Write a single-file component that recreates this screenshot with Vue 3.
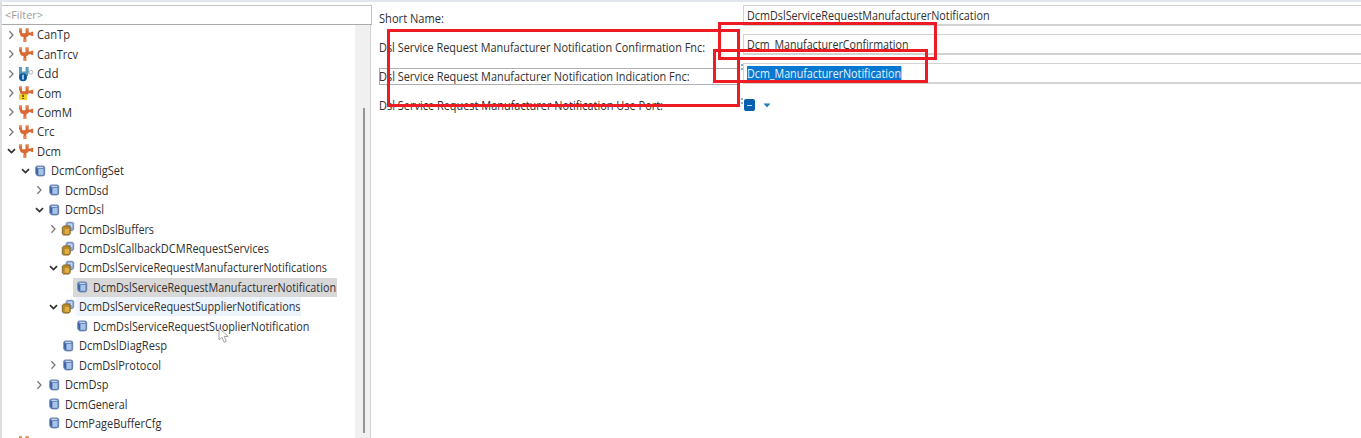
<script setup>
const ctx = document.createElement('canvas').getContext('2d')

// Condenses each label so that it takes exactly the given width.
function fit(text, width, size = 12) {
  ctx.font = `${size}px "Open Sans"`
  const natural = ctx.measureText(text).width
  return { transform: `scaleX(${width / natural})`, marginRight: `${width - natural}px` }
}

const rows = [
  { t: 'CanTp', d: 0, a: 'closed', i: 'module', w: 33 },
  { t: 'CanTrcv', d: 0, a: 'closed', i: 'module', w: 41 },
  { t: 'Cdd', d: 0, a: 'closed', i: 'cdd', w: 21.5 },
  { t: 'Com', d: 0, a: 'closed', i: 'warn', w: 24.5 },
  { t: 'ComM', d: 0, a: 'closed', i: 'module', w: 35 },
  { t: 'Crc', d: 0, a: 'closed', i: 'module', w: 17.5 },
  { t: 'Dcm', d: 0, a: 'open', i: 'module', w: 24 },
  { t: 'DcmConfigSet', d: 1, a: 'open', i: 'box', w: 73 },
  { t: 'DcmDsd', d: 2, a: 'closed', i: 'box', w: 43.5 },
  { t: 'DcmDsl', d: 2, a: 'open', i: 'box', w: 39 },
  { t: 'DcmDslBuffers', d: 3, a: 'closed', i: 'boxes', w: 75 },
  { t: 'DcmDslCallbackDCMRequestServices', d: 3, a: '', i: 'boxes', w: 190 },
  { t: 'DcmDslServiceRequestManufacturerNotifications', d: 3, a: 'open', i: 'boxes', w: 248 },
  { t: 'DcmDslServiceRequestManufacturerNotification', d: 4, a: '', i: 'box', w: 243, s: 'selected' },
  { t: 'DcmDslServiceRequestSupplierNotifications', d: 3, a: 'open', i: 'boxes', w: 221.5, s: 'hover' },
  { t: 'DcmDslServiceRequestSuoplierNotification', d: 4, a: '', i: 'box', w: 216.5 },
  { t: 'DcmDslDiagResp', d: 3, a: '', i: 'box', w: 88 },
  { t: 'DcmDslProtocol', d: 3, a: 'closed', i: 'box', w: 82 },
  { t: 'DcmDsp', d: 2, a: 'closed', i: 'box', w: 43.5 },
  { t: 'DcmGeneral', d: 2, a: '', i: 'box', w: 62.5 },
  { t: 'DcmPageBufferCfg', d: 2, a: '', i: 'box', w: 96.5 },
  { t: 'Dem', d: 0, a: 'closed', i: 'module', w: 24 },
]

const fields = [
  { l: 'Short Name:', lw: 65, v: 'DcmDslServiceRequestManufacturerNotification', w: 242.5 },
  { l: 'Dsl Service Request Manufacturer Notification Confirmation Fnc:', lw: 326, v: 'Dcm_ManufacturerConfirmation', w: 161.5 },
  { l: 'Dsl Service Request Manufacturer Notification Indication Fnc:', lw: 310.5, v: 'Dcm_ManufacturerNotification', w: 154, active: true },
  { l: 'Dsl Service Request Manufacturer Notification Use Port:', lw: 284 },
]
</script>

<template>
  <div class="window">
    <aside class="panel">
      <div class="filter"><span class="fit" :style="fit('<Filter>', 38, 11)">&lt;Filter&gt;</span></div>
      <div class="body">
        <div class="tree">
          <div v-for="r in rows" :key="r.t" class="row" :class="'depth' + r.d">
            <svg class="arrow" viewBox="0 0 10 12">
              <path v-if="r.a === 'closed'" class="closed" d="M3.4 2.2 7 6 3.4 9.8" />
              <path v-if="r.a === 'open'" class="open" d="M2 4.2 5.5 7.6 9 4.2" />
            </svg>
            <span class="node" :class="r.s">
              <svg class="icon" viewBox="0 0 16 16">
                <g v-if="r.i === 'module' || r.i === 'warn'">
                  <path d="M1 1.4h3v4.2q0 .6.8.6h2q.8 0 .8-.6V1.4h3v4h2.6V4.7h2V9h-2v-.8h-2.4Q10 9.8 8.3 10v4.8H5.5V10Q1.8 9.6 1.8 6.2L1 5z" fill="#d96a34" />
                  <path d="M1 1.4h3v2H1zM7.6 1.4h3v2h-3zM5.5 12.3h2.8v2.5H5.5z" fill="#e88a57" />
                </g>
                <g v-if="r.i === 'warn'">
                  <path d="M1 9.2h8v5.6H1z" fill="#f3d21b" />
                  <path d="M4.2 9.8h1.7v2.3H4.2zM4.2 13h1.7v1.1H4.2z" fill="#5b4a12" />
                </g>
                <g v-if="r.i === 'cdd'">
                  <path d="M1 1h3v4.5h3.6V1h3v4h1.4v2.5h-2V10H1z" fill="#5a9cba" />
                  <circle cx="12.9" cy="6.2" r="2" fill="#fff" stroke="#b2b9bd" />
                  <circle cx="5" cy="11.2" r="4" fill="#075b9e" />
                  <path d="M5 8.8v4.8" stroke="#fff" stroke-width="1.3" />
                </g>
                <g v-if="r.i === 'box'">
                  <path d="M3.8 4.2Q4 3 5.5 3h5.3q1.9 0 1.9 1.7v6.2q0 2-2 2H6.3q-1.7 0-2.5-2.2z" fill="#668abf" stroke="#5973a3" stroke-width=".9" />
                  <path d="M6.6 6h4.8v5.8H6.6z" fill="#a6c3e8" />
                  <path d="M5 3.8h5.6l.9 1.3H6z" fill="#c5d5ea" />
                  <path d="M4.2 4.8 6 6v6l-1.8-2z" fill="#3e62a0" />
                </g>
                <g v-if="r.i === 'boxes'">
                  <path d="M6.1 2.4 7.3 1.3h5.4l1 1v6l-1.4 1.4H6.1z" fill="#8ba8d5" stroke="#7389ae" />
                  <path d="M8 3.2h3.7v3" fill="none" stroke="#d3e2f5" />
                  <path d="M2.3 6.3 3.8 5H9l1.2 1.1v6.6L8.8 14H3.5l-1.2-1.1z" fill="#b98a2b" stroke="#806329" />
                  <path d="M4.8 8h4.4v4.8H4.8z" fill="#dfb040" />
                </g>
              </svg>
              <span class="text fit" :style="fit(r.t, r.w)">{{ r.t }}</span>
            </span>
          </div>
        </div>
        <div class="track"><div class="thumb"></div></div>
      </div>
      <svg class="cursor" viewBox="0 0 12 17"><path d="M1 1v12l3-2.7 2.2 5 2.2-1-2.2-4.8h4z" /></svg>
    </aside>

    <main class="form">
      <div v-for="f in fields" :key="f.l" class="field">
        <div class="label" :class="{ focused: f.active }"><span class="fit" :style="fit(f.l, f.lw)">{{ f.l }}</span></div>
        <div v-if="f.v" class="input">
          <span class="fit" :class="{ marked: f.active }" :style="fit(f.v, f.w)">{{ f.v }}</span>
        </div>
        <div v-else class="toggle">
          <span class="check"><i></i></span>
          <svg class="drop" viewBox="0 0 8 5"><path d="M.5.5h7L4 4.5z" /></svg>
        </div>
        <svg v-if="f.active || !f.v" class="hint" viewBox="0 0 7 7"><path d="M0 1h2M4 1h2M1 5h1M4 5h2" /></svg>
      </div>
    </main>

    <div class="frame labels"></div>
    <div class="frame confirmation"></div>
    <div class="frame notification"></div>
  </div>
</template>

<style>
body { margin: 0; overflow: hidden; }
</style>

<style scoped>
* { box-sizing: border-box; }
.window {
  position: relative; display: flex; width: 1361px; height: 438px; overflow: hidden;
  border-top: 2px solid #e2e7ee; background: #fff; color: #303030;
  font: 12px/16px "Open Sans", "Noto Sans", sans-serif; white-space: pre;
}
.fit { display: inline-block; flex: none; transform-origin: 0 50%; }
.panel {
  position: relative; width: 372px; height: 436px; flex: none; padding-top: 3px;
  border-left: 2px solid #dcdfe2; overflow: hidden;
}
.filter {
  width: 370px; height: 20px; padding: 0 0 0 3px; border: 1px solid #c4c4c4; border-left: 0;
  border-bottom-color: #aaa; color: #9b9b9b; font-size: 11px; line-height: 18px;
}
.body { display: flex; height: 420px; }
.tree { flex: 1; min-width: 0; }
.row { display: flex; align-items: center; height: 19.45px; padding-left: 4px; }
.depth1 { padding-left: 18px; }
.depth2 { padding-left: 32px; }
.depth3 { padding-left: 46px; }
.depth4 { padding-left: 60px; }
.arrow { width: 10px; height: 12px; flex: none; }
.arrow path { fill: none; }
.closed { stroke: #777; stroke-width: 1.25; }
.open { stroke: #303030; stroke-width: 1.7; }
.node { display: flex; align-items: center; height: 19px; padding-left: 2px; }
.icon { width: 16px; height: 16px; margin-right: 3px; flex: none; }
.text { height: 17px; line-height: 17px; }
.selected { background: linear-gradient(90deg, #fff 1px, #d8d8d8 1px); padding-right: 1px; }
.hover { background: linear-gradient(90deg, #fff 16px, #edf4fc 20px); }
.track { width: 16px; margin-right: 1px; padding: 83px 0 0 7px; background: #f0f0f0; border-right: 1px solid #d4d4d4; }
.thumb { width: 2px; height: 325px; margin-left: 1px; background: #959595; }
.cursor { position: absolute; left: 216px; top: 325px; width: 12px; height: 17px; }
.cursor path { fill: #fff; stroke: #a5a5a5; }
.form { flex: 1; padding: 3px 0 0 7px; }
.field { position: relative; display: flex; align-items: flex-start; height: 29px; }
.label { width: 359px; height: 17px; margin-top: 5px; flex: none; line-height: 17px; }
.focused { box-shadow: inset 0 0 0 1px #b0b0b0; }
.input {
  flex: 1; height: 21px; margin-left: 5px; padding: 2px 0 0 3px;
  border: solid #d2d2d2; border-width: 1px 0 2px 1px; line-height: 16px;
}
.marked { height: 16px; background: #0878d1; color: #e4f5ff; }
.toggle { display: flex; align-items: center; height: 26px; margin-left: 6px; }
.check { display: grid; place-items: center; width: 11px; height: 12px; border-radius: 2px; background: #075fb0; }
.check i { width: 5px; height: 1px; background: #b9ddf5; }
.drop { width: 8px; height: 5px; margin-left: 8px; fill: #257db2; }
.hint { position: absolute; left: 358px; top: 1px; width: 7px; height: 7px; }
.field:last-child .hint { top: 6px; }
.hint path { fill: none; stroke: #6895b9; stroke-width: 1.4; }
.frame { position: absolute; border: 3px solid #ed1c24; }
.labels { left: 387px; top: 27px; width: 353px; height: 78px; }
.confirmation { left: 718px; top: 20px; width: 219px; height: 38px; }
.notification { left: 713px; top: 47px; width: 215px; height: 34px; }
</style>
